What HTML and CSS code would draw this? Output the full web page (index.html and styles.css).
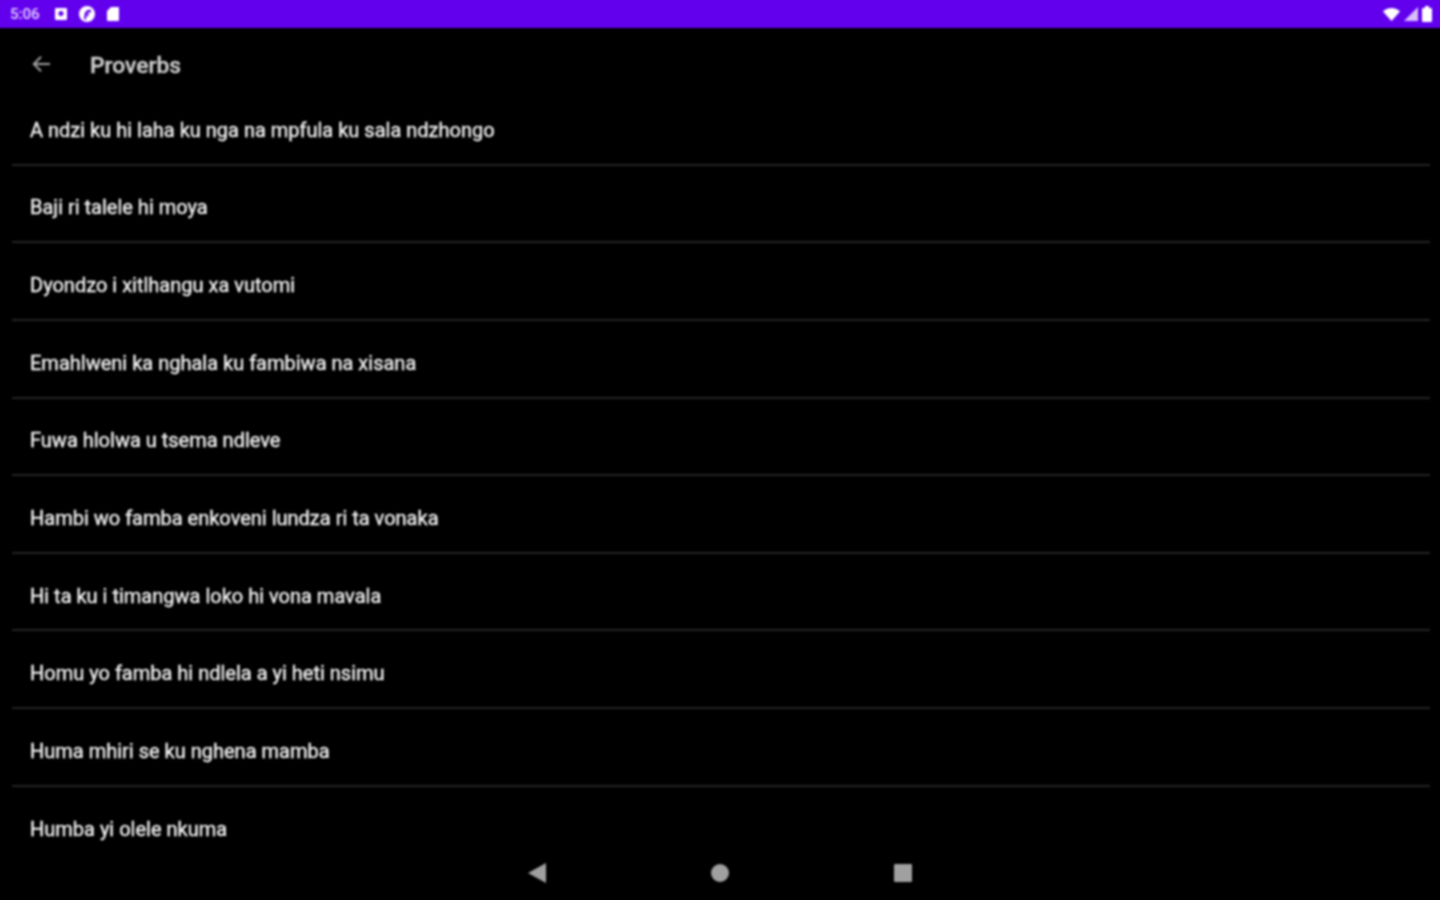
FILE: index.html
```html
<!DOCTYPE html>
<html>
<head>
    <meta charset="utf-8" />
    <title>Proverbs</title>
    <link rel="stylesheet" href="styles.css">
</head>
<body>
    <div class="app">
        <div class="status-bar">
            <div class="status-left">
                <span class="status-time">5:06</span>
                <svg class="status-icon" width="14" height="14" viewBox="0 0 14 14"><path fill="#fff" fill-rule="evenodd" d="M2 1h10a1 1 0 0 1 1 1v10a1 1 0 0 1-1 1H2a1 1 0 0 1-1-1V2a1 1 0 0 1 1-1zm5 3a2.5 2.5 0 1 0 0 5 2.5 2.5 0 0 0 0-5z"/></svg>
                <svg class="status-icon" width="18" height="18" viewBox="0 0 18 18"><path fill="#fff" fill-rule="evenodd" d="M9 1a8 8 0 1 1 0 16A8 8 0 0 1 9 1zm4 4C10 4 7 6 6.500 9.500L6 14l2 .5.500-3.500 2.500-.5V9L9 9.300C9.500 8 11 7.300 13 7.300z"/></svg>
                <svg class="status-icon" width="14" height="16" viewBox="0 0 14 16"><path fill="#fff" d="M5 1h7a1 1 0 0 1 1 1v12a1 1 0 0 1-1 1H2a1 1 0 0 1-1-1V5z"/></svg>
            </div>
            <div class="status-right">
                <svg width="17" height="13" viewBox="0 0 17 13"><path fill="#fff" d="M0 3.500C2 1.500 5 0 8.500 0S15 1.500 17 3.500L8.500 13z"/></svg>
                <svg width="14" height="14" viewBox="0 0 14 14"><path fill="#fff" opacity="0.75" d="M14 0v14H0z"/></svg>
                <svg width="10" height="16" viewBox="0 0 10 16"><path fill="#fff" d="M3 0h4v2h2a1 1 0 0 1 1 1v12a1 1 0 0 1-1 1H1a1 1 0 0 1-1-1V3a1 1 0 0 1 1-1h2z"/></svg>
            </div>
        </div>

        <div class="toolbar">
            <svg class="back-icon" width="18" height="18" viewBox="0 0 20 20"><path fill="none" stroke="#a0a0a0" stroke-width="2.2" d="M20 10H2M10 2l-8 8 8 8"/></svg>
            <span class="toolbar-title">Proverbs</span>
        </div>

        <div class="list">
            <div class="list-item">A ndzi ku hi laha ku nga na mpfula ku sala ndzhongo</div>
            <div class="list-item">Baji ri talele hi moya</div>
            <div class="list-item">Dyondzo i xitlhangu xa vutomi</div>
            <div class="list-item">Emahlweni ka nghala ku fambiwa na xisana</div>
            <div class="list-item">Fuwa hlolwa u tsema ndleve</div>
            <div class="list-item">Hambi wo famba enkoveni lundza ri ta vonaka</div>
            <div class="list-item">Hi ta ku i timangwa loko hi vona mavala</div>
            <div class="list-item">Homu yo famba hi ndlela a yi heti nsimu</div>
            <div class="list-item">Huma mhiri se ku nghena mamba</div>
            <div class="list-item">Humba yi olele nkuma</div>
        </div>

        <div class="nav-bar">
            <svg width="18" height="20" viewBox="0 0 18 20"><path fill="#a0a0a0" d="M18 0v20L0 10z"/></svg>
            <svg width="18" height="18" viewBox="0 0 18 18"><circle cx="9" cy="9" r="9" fill="#a0a0a0"/></svg>
            <svg width="18" height="18" viewBox="0 0 18 18"><rect width="18" height="18" rx="1" fill="#a0a0a0"/></svg>
        </div>
    </div>
</body>
</html>
```

FILE: styles.css
```css
* {
    padding: 0;
    margin: 0;
    box-sizing: border-box;
}

body {
    background: #000;
    font-family: Roboto, "Liberation Sans", sans-serif;
    overflow: hidden;
}

/* 4px bigger on each side so the blur doesn't fade the window edges */
.app {
    width: 1448px;
    height: 908px;
    margin: -4px;
    display: flex;
    flex-direction: column;
    overflow: hidden;
    filter: blur(0.9px);
}

.status-bar {
    height: 32px;
    flex-shrink: 0;
    background: #6200ee;
    display: flex;
    justify-content: space-between;
    align-items: center;
    padding: 4px 12px 0 14px;
}

.status-left {
    display: flex;
    align-items: center;
}

.status-time {
    width: 44px;
    color: #e0d0fc;
    font-size: 15px;
    font-weight: 500;
}

.status-icon {
    margin-right: 10px;
}

.status-right {
    display: flex;
    align-items: center;
    gap: 4px;
}

.toolbar {
    height: 60px;
    flex-shrink: 0;
    display: flex;
    align-items: center;
    padding: 14px 0 0 36px;
}

.back-icon {
    margin-right: 40px;
    margin-bottom: 2px;
}

.toolbar-title {
    color: #d0d0d0;
    font-size: 22.8px;
    font-weight: 500;
    -webkit-text-stroke: 0.3px #d0d0d0;
}

.list {
    flex: 1;
    overflow: hidden;
    padding: 0 14px 0 16px;
}

.list-item {
    height: 77.65px;
    display: flex;
    align-items: center;
    padding: 8px 0 0 18px;
    border-bottom: 2px solid #242424;
    color: #f0f0f0;
    font-size: 20px;
    -webkit-text-stroke: 0.4px #f0f0f0;
}

.nav-bar {
    height: 58px;
    flex-shrink: 0;
    display: flex;
    justify-content: center;
    align-items: center;
    gap: 165px;
    padding-bottom: 4px;
}
```
